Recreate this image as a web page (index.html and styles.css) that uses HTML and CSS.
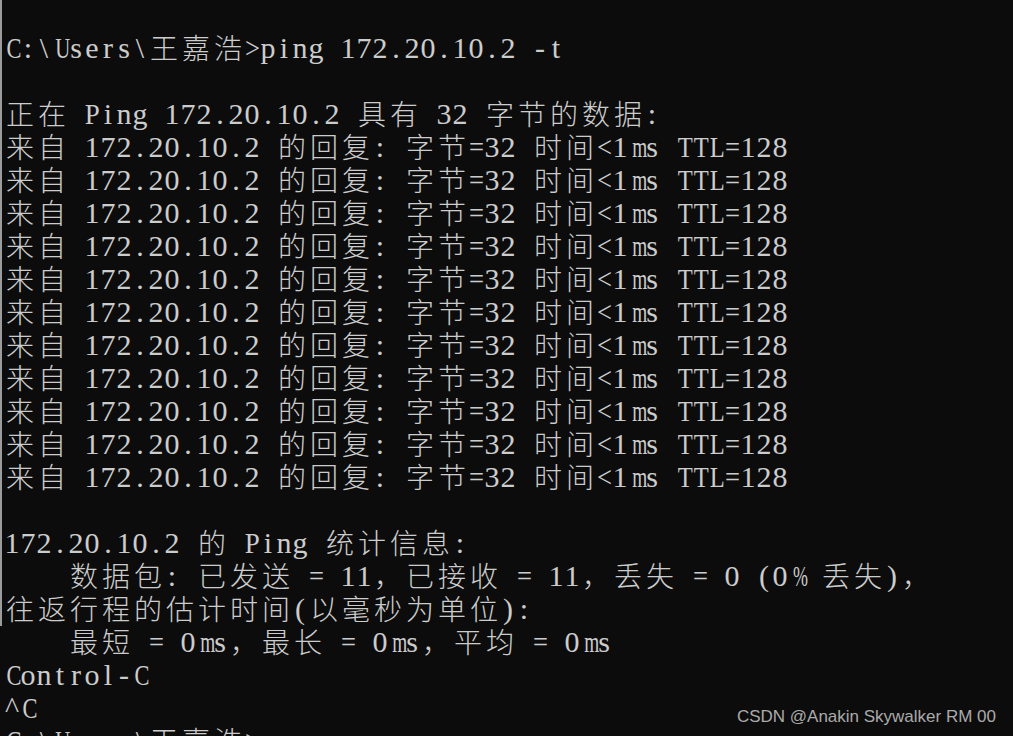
FILE: index.html
```html
<!DOCTYPE html>
<html lang="zh-CN">
<head>
<meta charset="utf-8">
<title>ping</title>
<link rel="stylesheet" href="styles.css">
</head>
<body>
<div class="window">
  <div class="edge"></div>
  <div class="term">
    <div class="ln"></div>
    <div class="ln">C:\Users\<span class="c">王嘉浩</span>&gt;ping 172.20.10.2 -t</div>
    <div class="ln"></div>
    <div class="ln"><span class="c">正在</span> Ping 172.20.10.2 <span class="c">具有</span> 32 <span class="c">字节的数据</span>:</div>
    <div class="ln"><span class="c">来自</span> 172.20.10.2 <span class="c">的回复</span>: <span class="c">字节</span>=32 <span class="c">时间</span>&lt;1ms TTL=128</div>
    <div class="ln"><span class="c">来自</span> 172.20.10.2 <span class="c">的回复</span>: <span class="c">字节</span>=32 <span class="c">时间</span>&lt;1ms TTL=128</div>
    <div class="ln"><span class="c">来自</span> 172.20.10.2 <span class="c">的回复</span>: <span class="c">字节</span>=32 <span class="c">时间</span>&lt;1ms TTL=128</div>
    <div class="ln"><span class="c">来自</span> 172.20.10.2 <span class="c">的回复</span>: <span class="c">字节</span>=32 <span class="c">时间</span>&lt;1ms TTL=128</div>
    <div class="ln"><span class="c">来自</span> 172.20.10.2 <span class="c">的回复</span>: <span class="c">字节</span>=32 <span class="c">时间</span>&lt;1ms TTL=128</div>
    <div class="ln"><span class="c">来自</span> 172.20.10.2 <span class="c">的回复</span>: <span class="c">字节</span>=32 <span class="c">时间</span>&lt;1ms TTL=128</div>
    <div class="ln"><span class="c">来自</span> 172.20.10.2 <span class="c">的回复</span>: <span class="c">字节</span>=32 <span class="c">时间</span>&lt;1ms TTL=128</div>
    <div class="ln"><span class="c">来自</span> 172.20.10.2 <span class="c">的回复</span>: <span class="c">字节</span>=32 <span class="c">时间</span>&lt;1ms TTL=128</div>
    <div class="ln"><span class="c">来自</span> 172.20.10.2 <span class="c">的回复</span>: <span class="c">字节</span>=32 <span class="c">时间</span>&lt;1ms TTL=128</div>
    <div class="ln"><span class="c">来自</span> 172.20.10.2 <span class="c">的回复</span>: <span class="c">字节</span>=32 <span class="c">时间</span>&lt;1ms TTL=128</div>
    <div class="ln"><span class="c">来自</span> 172.20.10.2 <span class="c">的回复</span>: <span class="c">字节</span>=32 <span class="c">时间</span>&lt;1ms TTL=128</div>
    <div class="ln"></div>
    <div class="ln">172.20.10.2 <span class="c">的</span> Ping <span class="c">统计信息</span>:</div>
    <div class="ln">    <span class="c">数据包</span>: <span class="c">已发送</span> = 11<span class="c">，已接收</span> = 11<span class="c">，丢失</span> = 0 (0% <span class="c">丢失</span>)<span class="c">，</span></div>
    <div class="ln"><span class="c">往返行程的估计时间</span>(<span class="c">以毫秒为单位</span>):</div>
    <div class="ln">    <span class="c">最短</span> = 0ms<span class="c">，最长</span> = 0ms<span class="c">，平均</span> = 0ms</div>
    <div class="ln">Control-C</div>
    <div class="ln">^C</div>
    <div class="ln">C:\Users\<span class="c">王嘉浩</span>&gt;</div>
  </div>
</div>
<div class="watermark">CSDN @Anakin Skywalker RM 00</div>
<script src="script.js"></script>
</body>
</html>
```

FILE: styles.css
```css
html, body {
  margin: 0;
  padding: 0;
  height: 736px;
  overflow: hidden;
  background: #0c0c0c;
}

.window {
  display: flex;
  align-items: flex-start;
  height: 736px;
  overflow: hidden;
}

.edge {
  flex: 0 0 2px;
  width: 2px;
  height: 626px;
  background: #9c9c9c;
}

.term {
  padding-left: 2px;
  margin-top: -2px;
  color: #cccccc;
  font-family: "Liberation Mono", monospace;
  font-size: 30px;
  letter-spacing: -2px;
}

.ln {
  height: 33px;
  line-height: 33px;
  white-space: pre;
}

.c {
  font-family: "Noto Sans CJK SC", sans-serif;
  font-size: 27px;
  font-weight: 300;
  letter-spacing: 5px;
  margin-left: 2px;
  margin-right: -2px;
}

/* character-cell grid, built by script.js */
.term.grid {
  font-family: "Liberation Serif", "Noto Sans CJK SC", serif;
  font-size: 30px;
  letter-spacing: 0;
}

.grid .c {
  letter-spacing: 0;
  margin: 0;
  font-size: 28px;
}

.k {
  display: inline-block;
  width: 16px;
  height: 33px;
  text-align: center;
  vertical-align: top;
  overflow: visible;
}

.kw {
  width: 32px;
}

.g {
  display: inline-block;
  transform-origin: 50% 50%;
}

.watermark {
  position: absolute;
  right: 17px;
  bottom: 9px;
  font-family: "Liberation Sans", Arial, sans-serif;
  font-size: 17px;
  color: rgba(255, 255, 255, 0.66);
}
```

FILE: script.js
```js
(function () {
  var term = document.querySelector('.term');
  if (!term) return;
  term.classList.add('grid');

  function isWide(ch) {
    var c = ch.codePointAt(0);
    return (c >= 0x2e80 && c <= 0x9fff) || (c >= 0xff00 && c <= 0xff60) || (c >= 0x3000 && c <= 0x303f);
  }

  var texts = [];
  var walker = document.createTreeWalker(term, NodeFilter.SHOW_TEXT, null);
  var n;
  while ((n = walker.nextNode())) {
    if (n.parentNode.closest('.ln')) texts.push(n);
  }

  var cells = [];
  texts.forEach(function (node) {
    var frag = document.createDocumentFragment();
    Array.from(node.nodeValue).forEach(function (ch) {
      if (ch === '\n' || ch === '\r') return;
      var cell = document.createElement('span');
      cell.className = 'k' + (isWide(ch) ? ' kw' : '');
      var g = document.createElement('span');
      g.className = 'g';
      g.textContent = ch === ' ' ? '\u00a0' : ch;
      cell.appendChild(g);
      frag.appendChild(cell);
      if (!isWide(ch) && ch !== ' ') cells.push(g);
    });
    node.parentNode.replaceChild(frag, node);
  });

  cells.forEach(function (g) {
    var w = g.getBoundingClientRect().width;
    if (w > 15) g.style.transform = 'scaleX(' + (15 / w).toFixed(3) + ')';
  });
})();
```
